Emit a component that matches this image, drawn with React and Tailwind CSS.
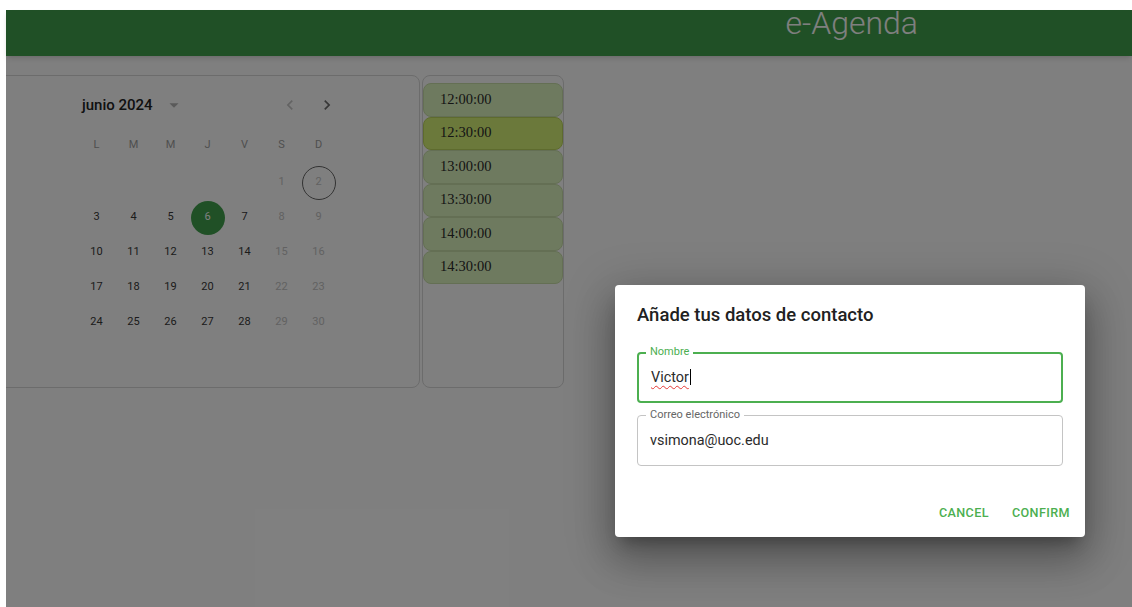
import clsx from "clsx";

const weekdays = ["L", "M", "M", "J", "V", "S", "D"];

// junio 2024, lunes primero
const weeks = [
    [null, null, null, null, null, 1, 2],
    [3, 4, 5, 6, 7, 8, 9],
    [10, 11, 12, 13, 14, 15, 16],
    [17, 18, 19, 20, 21, 22, 23],
    [24, 25, 26, 27, 28, 29, 30],
];

const slots = ["12:00:00", "12:30:00", "13:00:00", "13:30:00", "14:00:00", "14:30:00"];

const SELECTED_DAY = 6;
const TODAY = 2;
const SELECTED_SLOT = "12:30:00";

function Day({ n, col }) {
    if (!n) return <div />;
    const weekend = col >= 5;
    const selected = n === SELECTED_DAY;
    return (
        <div className="flex items-center justify-center">
            <span
                className={clsx(
                    "flex h-[34px] w-[34px] items-center justify-center rounded-full text-[11px]",
                    selected && "bg-[#41a14d] text-white",
                    !selected && weekend && "text-[#c4c4c4]",
                    !selected && !weekend && "text-[#383838]",
                    n === TODAY && "border border-[#666]"
                )}
            >
                {n}
            </span>
        </div>
    );
}

function Calendar() {
    return (
        <div className="-ml-[20px] h-[313px] w-[434px] shrink-0 rounded-lg border border-[#d8d8d8] pl-[91px] pt-[14px]">
            <div className="w-[259px]">
                {/* Month header */}
                <div className="flex h-[30px] items-center">
                    <span className="ml-[4px] text-[15px] font-medium text-[#222]">junio 2024</span>
                    <button className="ml-[9px] flex w-[24px] justify-center">
                        <svg width="22" height="22" viewBox="0 0 24 24" fill="#b4b4b4">
                            <path d="M7 10l5 5 5-5z" />
                        </svg>
                    </button>
                    <div className="-mr-[8px] ml-auto flex w-[74px]">
                        <button className="flex h-[30px] w-[37px] items-center justify-center">
                            <svg width="20" height="20" viewBox="0 0 24 24" fill="#c6c6c6">
                                <path d="M15.41 7.41 14 6l-6 6 6 6 1.41-1.41L10.83 12z" />
                            </svg>
                        </button>
                        <button className="flex h-[30px] w-[37px] items-center justify-center">
                            <svg width="20" height="20" viewBox="0 0 24 24" fill="#6f6f6f">
                                <path d="M10 6 8.59 7.41 13.17 12l-4.58 4.59L10 18l6-6z" />
                            </svg>
                        </button>
                    </div>
                </div>

                {/* Weekday labels */}
                <div className="mt-[10px] grid h-[30px] grid-cols-7 items-center text-center text-[11px] text-[#9e9e9e]">
                    {weekdays.map((d, i) => (
                        <span key={i}>{d}</span>
                    ))}
                </div>

                {/* Days */}
                <div className="mt-[5px]">
                    {weeks.map((week, w) => (
                        <div key={w} className="grid h-[35px] grid-cols-7">
                            {week.map((n, i) => (
                                <Day key={i} n={n} col={i} />
                            ))}
                        </div>
                    ))}
                </div>
            </div>
        </div>
    );
}

function TimeSlots() {
    return (
        <div className="ml-[2px] h-[313px] w-[142px] shrink-0 rounded-lg border border-[#d8d8d8] pt-[7px]">
            {slots.map((s) => (
                <div
                    key={s}
                    className={clsx(
                        "flex h-[33.5px] items-center rounded-lg border pl-[16px] font-['Liberation_Serif',serif] text-[14.5px] text-[#2a2a2a]",
                        s === SELECTED_SLOT ? "border-[#bcd75c] bg-[#d7f376]" : "border-[#c8dea8] bg-[#ddf5bf]"
                    )}
                >
                    {s}
                </div>
            ))}
        </div>
    );
}

function Field({ label, focused, children }) {
    return (
        <div
            className={clsx(
                "relative flex h-[51px] items-center rounded-[4px] px-[12px]",
                focused ? "border-2 border-[#4caf50] px-[11px]" : "border border-[#c4c4c4]"
            )}
        >
            <span
                className={clsx(
                    "absolute bg-white px-[4px] text-[11px] leading-[13px]",
                    focused ? "-top-[9px] left-[7px] text-[#4caf50]" : "-top-[8.5px] left-[8px] text-[#666]"
                )}
            >
                {label}
            </span>
            <div className="text-[14.4px] text-[#2b2b2b]">{children}</div>
        </div>
    );
}

function ContactDialog() {
    return (
        <div className="absolute left-[609px] top-[275px] w-[470px] rounded-[4px] bg-white shadow-[0_11px_15px_-7px_rgba(0,0,0,0.3),0_24px_38px_3px_rgba(0,0,0,0.2),0_9px_46px_8px_rgba(0,0,0,0.18)]">
            <h2 className="px-[22px] pt-[16px] text-[18.5px] font-medium leading-[29px] text-[#212121]">
                Añade tus datos de contacto
            </h2>

            <div className="mt-[22px] flex flex-col gap-[12px] px-[22px]">
                <Field label="Nombre" focused>
                    <span className="underline decoration-[#e53935] decoration-wavy decoration-1 underline-offset-[3px]">
                        Victor
                    </span>
                    <span className="ml-px inline-block h-[16px] w-px bg-black align-[-3px]" />
                </Field>
                <Field label="Correo electrónico">vsimona@uoc.edu</Field>
            </div>

            <div className="mt-[31px] flex h-[32px] items-center justify-end gap-[9px] pr-[8px]">
                <button className="px-[7px] text-[12.6px] font-medium tracking-[0.4px] text-[#4caf50]">CANCEL</button>
                <button className="px-[7px] text-[12.6px] font-medium tracking-[0.4px] text-[#4caf50]">CONFIRM</button>
            </div>
            <div className="h-[8px]" />
        </div>
    );
}

export default function App() {
    return (
        <div className="min-h-screen bg-white pl-[6px] pt-[10px] font-[Roboto,sans-serif]">
            <div className="relative h-[597px] bg-white">

                {/* App bar */}
                <header className="relative z-10 flex h-[46px] items-start justify-end bg-[#41a14d] pr-[214px] shadow-md">
                    <span className="text-[32px] font-light leading-[27px] text-white">e-Agenda</span>
                </header>

                {/* Agenda */}
                <main className="flex overflow-hidden pb-[2px] pt-[19px]">
                    <Calendar />
                    <TimeSlots />
                </main>

                {/* Modal backdrop + dialog */}
                <div className="absolute inset-0 z-20 bg-black/50">
                    <ContactDialog />
                </div>
            </div>
        </div>
    );
}
